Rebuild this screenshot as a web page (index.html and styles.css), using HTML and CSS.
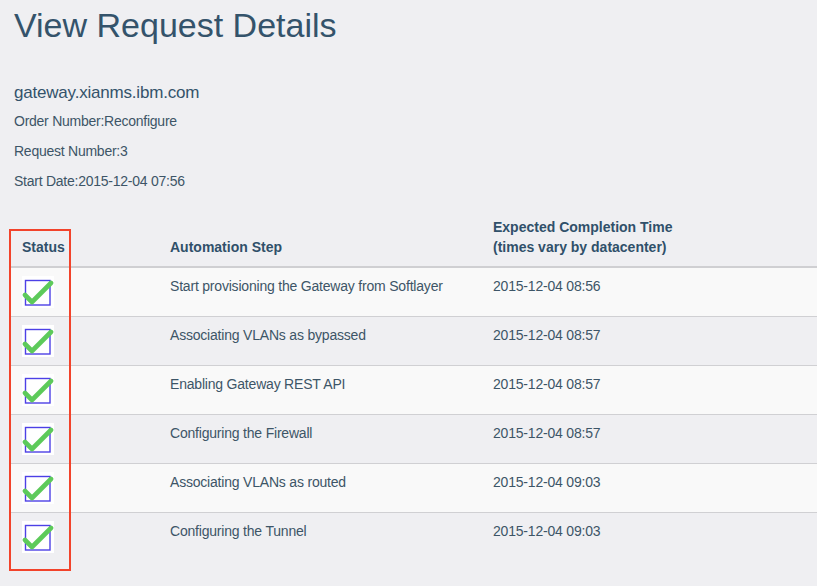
FILE: index.html
```html
<!DOCTYPE html>
<html>
<head>
<meta charset="utf-8">
<link rel="stylesheet" href="styles.css">
</head>
<body>
<div class="page">
  <h1 class="title">View Request Details</h1>
  <div class="info">
    <div class="host">gateway.xianms.ibm.com</div>
    <p class="line">Order Number:Reconfigure</p>
    <p class="line">Request Number:3</p>
    <p class="line">Start Date:2015-12-04 07:56</p>
  </div>
  <table class="steps">
    <thead>
      <tr>
        <th class="c-status">Status</th>
        <th class="c-step">Automation Step</th>
        <th class="c-time">Expected Completion Time<br>(times vary by datacenter)</th>
      </tr>
    </thead>
    <tbody>
      <tr>
        <td class="c-status"><svg class="chk" viewBox="0 0 32 32" width="32" height="32"><rect x="0" y="0" width="32" height="32" fill="#fff"/><rect x="3.5" y="4.5" width="24.5" height="24.5" fill="none" stroke="#4d40e6" stroke-width="1.4"/><polyline points="3,19 10,26 29,7" fill="none" stroke="#5dca5a" stroke-width="4.6" stroke-linecap="round" stroke-linejoin="round"/></svg></td>
        <td>Start provisioning the Gateway from Softlayer</td>
        <td>2015-12-04 08:56</td>
      </tr>
      <tr>
        <td class="c-status"><svg class="chk" viewBox="0 0 32 32" width="32" height="32"><rect x="0" y="0" width="32" height="32" fill="#fff"/><rect x="3.5" y="4.5" width="24.5" height="24.5" fill="none" stroke="#4d40e6" stroke-width="1.4"/><polyline points="3,19 10,26 29,7" fill="none" stroke="#5dca5a" stroke-width="4.6" stroke-linecap="round" stroke-linejoin="round"/></svg></td>
        <td>Associating VLANs as bypassed</td>
        <td>2015-12-04 08:57</td>
      </tr>
      <tr>
        <td class="c-status"><svg class="chk" viewBox="0 0 32 32" width="32" height="32"><rect x="0" y="0" width="32" height="32" fill="#fff"/><rect x="3.5" y="4.5" width="24.5" height="24.5" fill="none" stroke="#4d40e6" stroke-width="1.4"/><polyline points="3,19 10,26 29,7" fill="none" stroke="#5dca5a" stroke-width="4.6" stroke-linecap="round" stroke-linejoin="round"/></svg></td>
        <td>Enabling Gateway REST API</td>
        <td>2015-12-04 08:57</td>
      </tr>
      <tr>
        <td class="c-status"><svg class="chk" viewBox="0 0 32 32" width="32" height="32"><rect x="0" y="0" width="32" height="32" fill="#fff"/><rect x="3.5" y="4.5" width="24.5" height="24.5" fill="none" stroke="#4d40e6" stroke-width="1.4"/><polyline points="3,19 10,26 29,7" fill="none" stroke="#5dca5a" stroke-width="4.6" stroke-linecap="round" stroke-linejoin="round"/></svg></td>
        <td>Configuring the Firewall</td>
        <td>2015-12-04 08:57</td>
      </tr>
      <tr>
        <td class="c-status"><svg class="chk" viewBox="0 0 32 32" width="32" height="32"><rect x="0" y="0" width="32" height="32" fill="#fff"/><rect x="3.5" y="4.5" width="24.5" height="24.5" fill="none" stroke="#4d40e6" stroke-width="1.4"/><polyline points="3,19 10,26 29,7" fill="none" stroke="#5dca5a" stroke-width="4.6" stroke-linecap="round" stroke-linejoin="round"/></svg></td>
        <td>Associating VLANs as routed</td>
        <td>2015-12-04 09:03</td>
      </tr>
      <tr>
        <td class="c-status"><svg class="chk" viewBox="0 0 32 32" width="32" height="32"><rect x="0" y="0" width="32" height="32" fill="#fff"/><rect x="3.5" y="4.5" width="24.5" height="24.5" fill="none" stroke="#4d40e6" stroke-width="1.4"/><polyline points="3,19 10,26 29,7" fill="none" stroke="#5dca5a" stroke-width="4.6" stroke-linecap="round" stroke-linejoin="round"/></svg></td>
        <td>Configuring the Tunnel</td>
        <td>2015-12-04 09:03</td>
      </tr>
    </tbody>
  </table>
  <div class="highlight"></div>
</div>
</body>
</html>
```

FILE: styles.css
```css
html, body {
  margin: 0;
  padding: 0;
  background: #efeff2;
}
body {
  font-family: "Liberation Sans", Arial, sans-serif;
  color: #3d5567;
  width: 817px;
  height: 586px;
  overflow: hidden;
}
.page {
  position: relative;
  display: flow-root;
  padding-left: 9px;
}
.title {
  margin: 6px 0 0 5px;
  font-size: 34px;
  font-weight: normal;
  line-height: 38px;
  color: #34536b;
}
.info {
  margin: 37px 0 0 5px;
}
.host {
  font-size: 17px;
  line-height: 24px;
  letter-spacing: -0.2px;
  color: #34536b;
  margin-bottom: 6px;
}
.line {
  margin: 0 0 10px 0;
  font-size: 14px;
  line-height: 20px;
  letter-spacing: -0.25px;
}
.steps {
  margin-top: 18px;
  border-collapse: collapse;
  width: 808px;
  table-layout: fixed;
}
.steps th {
  text-align: left;
  vertical-align: bottom;
  font-size: 14px;
  line-height: 20px;
  font-weight: bold;
  color: #30506a;
  padding: 8px 13px 9px;
  border-bottom: 2px solid #cfcfd2;
}
.steps td {
  font-size: 14px;
  line-height: 20px;
  letter-spacing: -0.2px;
  padding: 8px 13px;
  vertical-align: top;
  border-bottom: 1px solid #d0d0d3;
}
.steps tbody tr:nth-child(odd) td {
  background: #f9f9f9;
}
.steps tbody tr:last-child td {
  border-bottom: none;
}
.c-status {
  width: 122px;
}
.c-step {
  width: 297px;
}
.chk {
  display: block;
}
.highlight {
  position: absolute;
  left: 9px;
  top: 229px;
  width: 58px;
  height: 338px;
  border: 2px solid #f2432b;
}
```
